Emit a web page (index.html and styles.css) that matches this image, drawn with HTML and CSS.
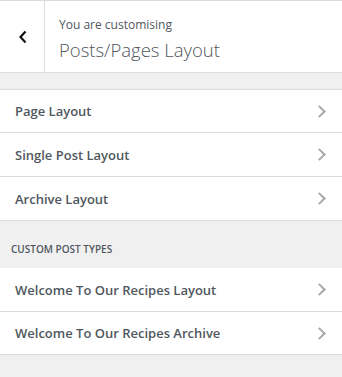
FILE: index.html
```html
<!DOCTYPE html>
<html lang="en">
<head>
  <meta charset="UTF-8" />
  <meta name="viewport" content="width=device-width, initial-scale=1.0"/>
  <title>Customizer</title>
  <link rel="stylesheet" href="styles.css">
</head>
<body>

  <div class="panel">
    <div class="panel-header">
      <button class="back-btn" aria-label="Back">
        <svg width="10" height="14" viewBox="0 0 10 14"><path d="M7.5 1.5 L2.5 7 L7.5 12.5" fill="none" stroke="#111" stroke-width="2.2"/></svg>
      </button>
      <div class="header-title">
        <span class="customising">You are customising</span>
        <h3>Posts/Pages Layout</h3>
      </div>
    </div>

    <ul class="section-list first">
      <li>Page Layout <span class="chev"></span></li>
      <li>Single Post Layout <span class="chev"></span></li>
      <li>Archive Layout <span class="chev"></span></li>
    </ul>

    <h4 class="group-title">Custom Post Types</h4>

    <ul class="section-list last">
      <li>Welcome To Our Recipes Layout <span class="chev"></span></li>
      <li>Welcome To Our Recipes Archive <span class="chev"></span></li>
    </ul>
  </div>

</body>
</html>
```

FILE: styles.css
```css
body {
  font-family: 'Open Sans', 'Noto Sans', sans-serif;
  background-color: #f0f0f1;
  margin: 0;
  padding: 0;
  color: #50575e;
}

.panel {
  width: 342px;
}

.panel-header {
  display: flex;
  height: 71px;
  background-color: #fff;
  border-top: 1px solid #dcdcde;
  border-bottom: 1px solid #dcdcde;
}

.back-btn {
  width: 45px;
  border: none;
  border-right: 1px solid #dcdcde;
  background: #fff;
  padding: 0 0 0 2px;
  display: flex;
  align-items: center;
  justify-content: center;
}

.header-title {
  padding: 14px 0 0 14px;
}

.customising {
  display: block;
  font-size: 12px;
  line-height: 20px;
}

.header-title h3 {
  margin: 3px 0 0;
  font-size: 18.5px;
  font-weight: 300;
  line-height: 24px;
  color: #50575e;
}

.section-list {
  list-style: none;
  margin: 0;
  padding: 0;
  background-color: #fff;
}

.section-list.first {
  margin-top: 16px;
  border-top: 1px solid #dcdcde;
}

.section-list li {
  display: flex;
  align-items: center;
  justify-content: space-between;
  height: 43px;
  padding: 0 18px 0 15px;
  font-size: 13px;
  font-weight: 600;
  border-bottom: 1px solid #dcdcde;
}

.section-list.first li:first-child,
.section-list.last li:last-child {
  height: 42px;
}

.chev {
  width: 7px;
  height: 7px;
  border-top: 2px solid #a7aaad;
  border-right: 2px solid #a7aaad;
  transform: rotate(45deg);
}

.group-title {
  margin: 0;
  padding: 22px 0 13px 11px;
  font-size: 10px;
  font-weight: 600;
  text-transform: uppercase;
  line-height: 12px;
  color: #50575e;
}
```
